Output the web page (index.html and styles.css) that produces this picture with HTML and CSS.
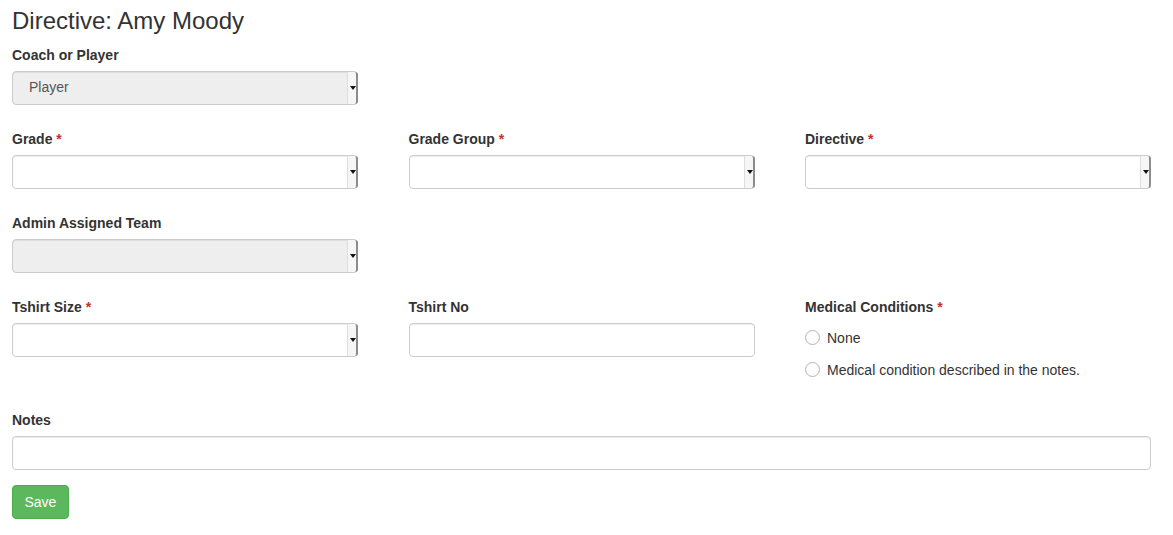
FILE: index.html
```html
<!DOCTYPE html>
<html lang="en">
<head>
<meta charset="utf-8">
<title>Directive: Amy Moody</title>
<link rel="stylesheet" href="styles.css">
</head>
<body>
<div class="page">
  <h3 class="title">Directive: Amy Moody</h3>
  <form class="form">
    <div class="row">
      <div class="group">
        <label class="label">Coach or Player</label>
        <div class="select disabled"><span class="value">Player</span><span class="arrow"></span></div>
      </div>
    </div>
    <div class="row">
      <div class="group">
        <label class="label">Grade <span class="req">*</span></label>
        <div class="select"><span class="value"></span><span class="arrow"></span></div>
      </div>
      <div class="group">
        <label class="label">Grade Group <span class="req">*</span></label>
        <div class="select"><span class="value"></span><span class="arrow"></span></div>
      </div>
      <div class="group">
        <label class="label">Directive <span class="req">*</span></label>
        <div class="select"><span class="value"></span><span class="arrow"></span></div>
      </div>
    </div>
    <div class="row">
      <div class="group">
        <label class="label">Admin Assigned Team</label>
        <div class="select disabled"><span class="value"></span><span class="arrow"></span></div>
      </div>
    </div>
    <div class="row row-tall">
      <div class="group">
        <label class="label">Tshirt Size <span class="req">*</span></label>
        <div class="select"><span class="value"></span><span class="arrow"></span></div>
      </div>
      <div class="group">
        <label class="label">Tshirt No</label>
        <div class="input"></div>
      </div>
      <div class="group">
        <label class="label">Medical Conditions <span class="req">*</span></label>
        <div class="radios">
          <div class="radio"><span class="circle"></span><span>None</span></div>
          <div class="radio"><span class="circle"></span><span>Medical condition described in the notes.</span></div>
        </div>
      </div>
    </div>
    <div class="group full">
      <label class="label">Notes</label>
      <div class="input"></div>
    </div>
    <button type="button" class="btn">Save</button>
  </form>
</div>
</body>
</html>
```

FILE: styles.css
```css
* { box-sizing: border-box; }
html, body { margin: 0; padding: 0; background: #fff; }
body {
  font-family: "Liberation Sans", Arial, Helvetica, sans-serif;
  font-size: 14px;
  line-height: 20px;
  color: #333;
}
.page {
  width: 1139px;
  margin-left: 12px;
}
.title {
  margin: 8px 0 11px;
  font-size: 24px;
  font-weight: 400;
  line-height: 26px;
  color: #333;
}
.row {
  display: grid;
  grid-template-columns: repeat(3, 1fr);
  column-gap: 50.5px;
  margin-bottom: 24px;
}
.row-tall { margin-bottom: 30px; }
.group { display: flex; flex-direction: column; }
.label {
  display: block;
  font-weight: 700;
  line-height: 20px;
  margin-bottom: 6px;
}
.req { color: #c9302c; }
.select, .input {
  position: relative;
  height: 34px;
  border: 1px solid #ccc;
  border-radius: 4px;
  background: #fff;
  box-shadow: inset 0 1px 1px rgba(0,0,0,.075);
  color: #555;
}
.select.disabled { background: #eee; }
.value {
  display: block;
  padding: 5px 16px 7px;
  line-height: 20px;
}
.arrow {
  position: absolute;
  top: 0;
  right: -1px;
  bottom: 0;
  width: 11px;
  background: #f6f6f6;
  border-left: 1px solid #dedede;
  border-right: 2px solid #8c8c8c;
  border-radius: 0 3px 3px 0;
}
.arrow::after {
  content: "";
  position: absolute;
  left: 2px;
  top: 14px;
  border-left: 3px solid transparent;
  border-right: 3px solid transparent;
  border-top: 4px solid #111;
}
.radios {
  padding-top: 5px;
  display: flex;
  flex-direction: column;
  gap: 12px;
}
.radio {
  display: flex;
  align-items: center;
  height: 20px;
  color: #333;
}
.circle {
  width: 15px;
  height: 15px;
  border: 1px solid #b4b4b4;
  border-radius: 50%;
  background: #fdfdfd;
  margin: 0 7px 0 0;
  position: relative;
  top: -1px;
}
.full { margin-bottom: 15px; }
.btn {
  display: inline-block;
  height: 34px;
  padding: 6px 11.5px;
  font-family: inherit;
  font-size: 14px;
  line-height: 20px;
  color: #fff;
  background: #5cb85c;
  border: 1px solid #4cae4c;
  border-radius: 4px;
}
```
